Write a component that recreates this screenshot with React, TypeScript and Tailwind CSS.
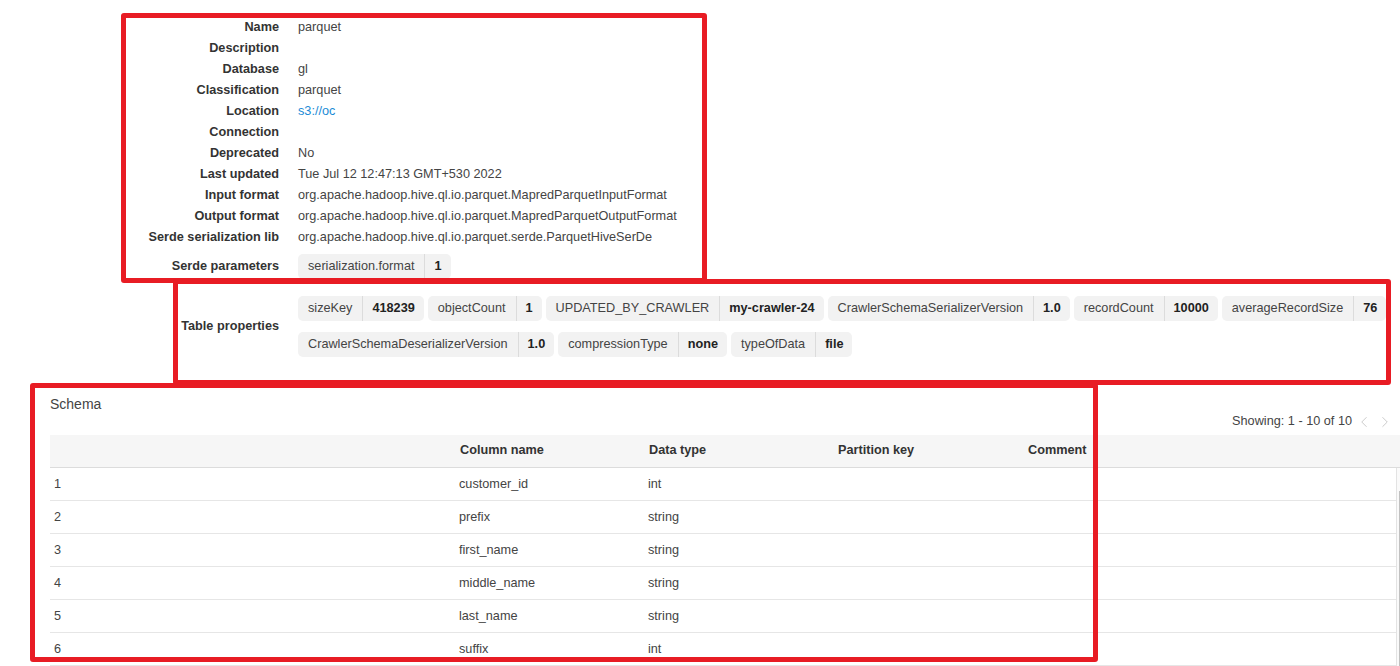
import React from 'react';
import { ChevronLeft, ChevronRight } from 'lucide-react';

const details: Array<{ label: string; value: string; link?: boolean }> = [
  { label: 'Name', value: 'parquet' },
  { label: 'Description', value: '' },
  { label: 'Database', value: 'gl' },
  { label: 'Classification', value: 'parquet' },
  { label: 'Location', value: 's3://oc', link: true },
  { label: 'Connection', value: '' },
  { label: 'Deprecated', value: 'No' },
  { label: 'Last updated', value: 'Tue Jul 12 12:47:13 GMT+530 2022' },
  { label: 'Input format', value: 'org.apache.hadoop.hive.ql.io.parquet.MapredParquetInputFormat' },
  { label: 'Output format', value: 'org.apache.hadoop.hive.ql.io.parquet.MapredParquetOutputFormat' },
  { label: 'Serde serialization lib', value: 'org.apache.hadoop.hive.ql.io.parquet.serde.ParquetHiveSerDe' },
];

// split by hand so the wrap matches the screenshot
const propRows: Array<Array<[string, string]>> = [
  [
    ['sizeKey', '418239'],
    ['objectCount', '1'],
    ['UPDATED_BY_CRAWLER', 'my-crawler-24'],
    ['CrawlerSchemaSerializerVersion', '1.0'],
    ['recordCount', '10000'],
    ['averageRecordSize', '76'],
  ],
  [
    ['CrawlerSchemaDeserializerVersion', '1.0'],
    ['compressionType', 'none'],
    ['typeOfData', 'file'],
  ],
];

const schema = [
  { name: 'customer_id', type: 'int' },
  { name: 'prefix', type: 'string' },
  { name: 'first_name', type: 'string' },
  { name: 'middle_name', type: 'string' },
  { name: 'last_name', type: 'string' },
  { name: 'suffix', type: 'int' },
];

const Chip: React.FC<{ k: string; v: string }> = ({ k, v }) => (
  <div className="flex h-[25px] shrink-0 items-stretch rounded-[5px] bg-[#f2f2f2] whitespace-nowrap">
    <span className="flex items-center px-[10px] text-[#444]">{k}</span>
    <span className="w-px bg-[#dcdcdc]" />
    <span className="flex items-center px-[9px] font-bold text-[#222]">{v}</span>
  </div>
);

export default function App() {
  return (
    <div className="relative h-[666px] w-[1400px] overflow-hidden bg-white font-['Liberation_Sans',Arial,sans-serif] text-[12.7px] text-[#444]">
      {/* details */}
      <div className="pt-[17px]">
        {details.map((row) => (
          <div key={row.label} className="flex h-[21px] items-center">
            <div className="w-[279px] shrink-0 text-right font-bold text-[#333]">{row.label}</div>
            <div className={`ml-[19px] whitespace-nowrap ${row.link ? 'text-[#1b8bd6]' : 'text-[#444]'}`}>
              {row.value}
            </div>
          </div>
        ))}

        <div className="mt-[6px] flex h-[25px] items-center">
          <div className="w-[279px] shrink-0 text-right font-bold text-[#333]">Serde parameters</div>
          <div className="ml-[19px] flex">
            <Chip k="serialization.format" v="1" />
          </div>
        </div>

        <div className="mt-[17px] flex items-center">
          <div className="w-[279px] shrink-0 text-right font-bold text-[#333]">Table properties</div>
          <div className="ml-[19px] flex flex-col gap-[11px]">
            {propRows.map((chips, i) => (
              <div key={i} className="flex gap-[4px]">
                {chips.map(([k, v]) => (
                  <Chip key={k} k={k} v={v} />
                ))}
              </div>
            ))}
          </div>
        </div>
      </div>

      {/* schema */}
      <div className="ml-[50px] mt-[37px] w-[1363px]">
        <div className="h-[20px] text-[14px] leading-[20px] text-[#444]">Schema</div>
        <div className="flex h-[16px] items-center justify-end pr-[19px]">
          <span className="text-[#444]">Showing: 1 - 10 of 10</span>
          <ChevronLeft size={18} strokeWidth={1.25} className="ml-[3px] text-[#c8c8c8]" />
          <ChevronRight size={18} strokeWidth={1.25} className="ml-[3px] text-[#c8c8c8]" />
        </div>

        <div className="mt-[5px] flex h-[33px] items-center border-b border-[#dcdcdc] bg-[#f6f6f6] font-bold text-[#333]">
          <div className="w-[405px] shrink-0 pl-[4px]" />
          <div className="w-[189px] shrink-0 pl-[5px]">Column name</div>
          <div className="w-[190px] shrink-0 pl-[5px]">Data type</div>
          <div className="w-[190px] shrink-0 pl-[4px]">Partition key</div>
          <div className="flex-1 pl-[4px]">Comment</div>
        </div>

        <div className="flex">
          <div className="flex-1">
            {schema.map((col, i) => (
              <div key={col.name} className="flex h-[33px] items-center border-b border-[#e6e6e6] pt-px text-[#444]">
                <div className="w-[405px] shrink-0 pl-[4px]">{i + 1}</div>
                <div className="w-[189px] shrink-0 pl-[4px]">{col.name}</div>
                <div className="w-[190px] shrink-0 pl-[4px]">{col.type}</div>
                <div className="w-[190px] shrink-0 pl-[4px]" />
                <div className="flex-1 pl-[4px]" />
              </div>
            ))}
          </div>
          <div className="w-[17px] shrink-0 border-l border-[#e3e3e3] bg-[#fafafa]">
            <div className="ml-[2px] mt-[23px] h-[220px] w-[11px] bg-[#c1c1c1]" />
          </div>
        </div>
      </div>

      {/* red annotation boxes drawn over the screenshot */}
      <div className="pointer-events-none absolute left-[121px] top-[13px] h-[270px] w-[586px] rounded-[3px] border-[5px] border-[#e81c24]" />
      <div className="pointer-events-none absolute left-[173px] top-[279px] h-[106px] w-[1218px] rounded-[3px] border-[5px] border-[#e81c24]" />
      <div className="pointer-events-none absolute left-[30px] top-[383px] h-[279px] w-[1068px] rounded-[3px] border-[5px] border-[#e81c24]" />
    </div>
  );
}
